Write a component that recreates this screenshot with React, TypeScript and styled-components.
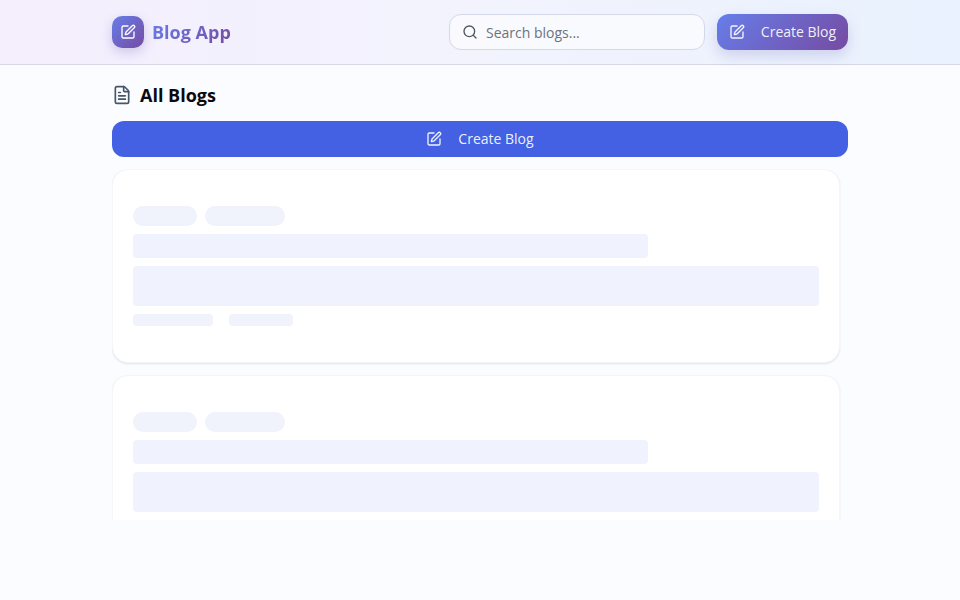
import React from "react";
import styled, { createGlobalStyle } from "styled-components";
import { FileText, Search, SquarePen } from "lucide-react";

const Global = createGlobalStyle`
  html, body { margin: 0; padding: 0; height: 100%; }
  body { background: #fbfcff; font-family: "Open Sans", "Noto Sans", sans-serif; overflow: hidden; }
  * { box-sizing: border-box; }
`;

const Page = styled.div`
  height: 600px;
  display: flex;
  flex-direction: column;
`;

const Header = styled.header`
  height: 65px;
  flex: none;
  display: flex;
  justify-content: center;
  background: linear-gradient(90deg, #f5eefd 0%, #f2f3fd 50%, #e9f2fe 100%);
  border-bottom: 1px solid #d5d9e4;
`;

const HeaderInner = styled.div`
  width: 736px;
  display: flex;
  align-items: center;
  justify-content: space-between;
`;

const Brand = styled.div`
  display: flex;
  align-items: center;
  gap: 8px;
`;

const LogoBox = styled.div`
  width: 32px;
  height: 32px;
  border-radius: 10px;
  display: flex;
  align-items: center;
  justify-content: center;
  color: #fff;
  background: linear-gradient(135deg, #667eea 0%, #764ba2 100%);
  box-shadow: 0 4px 12px rgba(102, 90, 180, 0.28);
`;

const BrandName = styled.span`
  font-size: 18px;
  font-weight: 700;
  line-height: 28px;
  background: linear-gradient(135deg, #667eea 0%, #764ba2 100%);
  -webkit-background-clip: text;
  background-clip: text;
  color: transparent;
`;

const Actions = styled.div`
  display: flex;
  align-items: center;
  gap: 12px;
`;

const SearchBox = styled.div`
  width: 256px;
  height: 36px;
  border: 1px solid #d3d9e8;
  border-radius: 12px;
  background: rgba(255, 255, 255, 0.6);
  display: flex;
  align-items: center;
  gap: 8px;
  padding-left: 12px;
  color: #4b5563;
`;

const SearchText = styled.span`
  font-size: 14px;
  line-height: 20px;
  padding-top: 1px;
  color: #6b7280;
`;

const HeaderButton = styled.div`
  width: 131px;
  height: 36px;
  border-radius: 12px;
  background: linear-gradient(135deg, #667eea 0%, #764ba2 100%);
  box-shadow: 0 6px 14px rgba(102, 90, 180, 0.22);
  color: rgba(255, 255, 255, 0.92);
  display: flex;
  align-items: center;
  justify-content: center;
  gap: 16px;
  font-size: 14px;
  line-height: 20px;
`;

const Main = styled.main`
  width: 736px;
  margin: 0 auto;
  padding-top: 16px;
`;

const TitleRow = styled.div`
  height: 28px;
  display: flex;
  align-items: center;
  gap: 8px;
  color: #475569;
`;

const Title = styled.h1`
  margin: 0;
  font-size: 18px;
  line-height: 28px;
  font-weight: 700;
  color: #0a0a0f;
`;

const WideButton = styled.div`
  margin-top: 12px;
  height: 36px;
  border-radius: 12px;
  background: #4361e2;
  color: rgba(255, 255, 255, 0.92);
  display: flex;
  align-items: center;
  justify-content: center;
  gap: 16px;
  font-size: 14px;
  line-height: 20px;
`;

const List = styled.div`
  margin-top: 12px;
  height: 351px;
  width: 736px;
  padding-right: 8px;
  padding-bottom: 4px;
  overflow: hidden;
  display: flex;
  flex-direction: column;
  gap: 12px;
`;

const Card = styled.div`
  flex: none;
  height: 194px;
  padding: 36px 20px;
  background: #fff;
  border: 1px solid #f4f5f8;
  border-radius: 16px;
  box-shadow: 0 1px 2px rgba(0, 0, 0, 0.1);
  display: flex;
  flex-direction: column;
  gap: 8px;
`;

const Row = styled.div<{ $gap: number }>`
  display: flex;
  gap: ${(p) => p.$gap}px;
`;

const Pill = styled.div<{ $w: number }>`
  width: ${(p) => p.$w}px;
  height: 20px;
  border-radius: 10px;
  background: #f0f2fc;
`;

const TitleLine = styled.div`
  width: 75%;
  height: 24px;
  border-radius: 4px;
  background: #f0f2fd;
`;

const BodyBlock = styled.div`
  height: 40px;
  border-radius: 4px;
  background: #f0f2fd;
`;

const Meta = styled.div<{ $w: number }>`
  width: ${(p) => p.$w}px;
  height: 12px;
  border-radius: 4px;
  background: #f0f2fc;
`;

function SkeletonCard() {
  return (
    <Card>
      <Row $gap={8}>
        <Pill $w={64} />
        <Pill $w={80} />
      </Row>
      <TitleLine />
      <BodyBlock />
      <Row $gap={16}>
        <Meta $w={80} />
        <Meta $w={64} />
      </Row>
    </Card>
  );
}

export default function App() {
  return (
    <Page>
      <Global />
      <Header>
        <HeaderInner>
          <Brand>
            <LogoBox>
              <SquarePen size={16} strokeWidth={2} />
            </LogoBox>
            <BrandName>Blog App</BrandName>
          </Brand>
          <Actions>
            <SearchBox>
              <Search size={16} strokeWidth={2} />
              <SearchText>Search blogs...</SearchText>
            </SearchBox>
            <HeaderButton>
              <SquarePen size={16} strokeWidth={2} />
              <span>Create Blog</span>
            </HeaderButton>
          </Actions>
        </HeaderInner>
      </Header>
      <Main>
        <TitleRow>
          <FileText size={20} strokeWidth={2} />
          <Title>All Blogs</Title>
        </TitleRow>
        <WideButton>
          <SquarePen size={16} strokeWidth={2} />
          <span>Create Blog</span>
        </WideButton>
        <List>
          <SkeletonCard />
          <SkeletonCard />
        </List>
      </Main>
    </Page>
  );
}
